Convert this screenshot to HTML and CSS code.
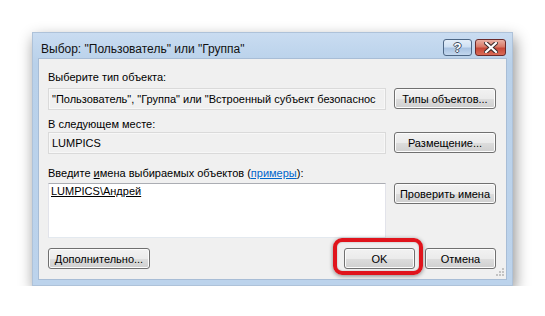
FILE: index.html
```html
<!DOCTYPE html>
<html lang="ru">
<head>
  <meta charset="UTF-8">
  <title>Выбор: "Пользователь" или "Группа"</title>
  <link rel="stylesheet" href="styles.css">
</head>
<body>

  <div class="window">
    <div class="titlebar">
      <span class="title">Выбор: "Пользователь" или "Группа"</span>
      <div class="caption-buttons">
        <span class="cap-btn help">?</span>
        <span class="cap-btn close">
          <svg width="14" height="11" viewBox="0 0 14 11">
            <path d="M2 1 L12 10 M12 1 L2 10" stroke="#3b2b2b" stroke-width="4.2" stroke-linecap="square"/>
            <path d="M2 1 L12 10 M12 1 L2 10" stroke="#fff" stroke-width="2.2" stroke-linecap="square"/>
          </svg>
        </span>
      </div>
    </div>

    <div class="client">
      <div class="label first">Выберите тип объекта:</div>
      <div class="row">
        <div class="field"><span class="clip">"Пользователь", "Группа" или "Встроенный субъект безопаснос</span></div>
        <button class="btn">Типы объектов...</button>
      </div>

      <div class="label second">В следующем месте:</div>
      <div class="row">
        <div class="field">LUMPICS</div>
        <button class="btn">Размещение...</button>
      </div>

      <div class="label third">Введите <u>и</u>мена выбираемых объектов (<a href="#">примеры</a>):</div>
      <div class="row">
        <div class="names"><u>LUMPICS\Андрей</u></div>
        <button class="btn">Проверить имена</button>
      </div>

      <div class="bottom">
        <button class="btn">Дополнительно...</button>
        <div class="actions">
          <div class="ok-wrap">
            <button class="btn ok">OK</button>
            <span class="highlight"></span>
          </div>
          <button class="btn small">Отмена</button>
        </div>
      </div>

      <svg class="grip" width="8" height="8" viewBox="0 0 8 8">
        <rect x="6" y="0" width="2" height="2" fill="#c3c3c3"/>
        <rect x="3" y="3" width="2" height="2" fill="#c3c3c3"/>
        <rect x="6" y="3" width="2" height="2" fill="#c3c3c3"/>
        <rect x="0" y="6" width="2" height="2" fill="#c3c3c3"/>
        <rect x="3" y="6" width="2" height="2" fill="#c3c3c3"/>
        <rect x="6" y="6" width="2" height="2" fill="#c3c3c3"/>
      </svg>
    </div>
  </div>

</body>
</html>
```

FILE: styles.css
```css
body {
  margin: 0;
  background: #ffffff;
  font-family: "Liberation Sans", Arial, sans-serif;
  font-size: 11px;
  color: #000;
}

.window {
  margin: 32px 0 0 32px;
  width: 481px;
  height: 254px;
  box-sizing: border-box;
  background: linear-gradient(#c9dcf1, #b9d1ea 30px, #bcd3ec);
  border: 1px solid #aec2d9;
  box-shadow: 2px 6px 14px rgba(0, 0, 0, 0.45);
  display: flex;
  flex-direction: column;
}

.titlebar {
  height: 25px;
  display: flex;
  align-items: flex-start;
  justify-content: space-between;
  padding: 0 6px 0 8px;
}

.title {
  margin-top: 9px;
  font-size: 12px;
  color: #111;
}

.caption-buttons {
  display: flex;
  gap: 3px;
  margin-top: 6px;
}

.cap-btn {
  height: 15px;
  border: 1px solid #4d6684;
  border-radius: 3px;
  display: flex;
  align-items: center;
  justify-content: center;
}

.help {
  width: 27px;
  background: linear-gradient(#e4eef9, #cfe0f3 45%, #a9c3e2 55%, #c3d7ee);
  color: #fff;
  font-weight: bold;
  font-size: 13px;
  text-shadow: 1px 0 #3d4c60, -1px 0 #3d4c60, 0 1px #3d4c60, 0 -1px #3d4c60;
}

.close {
  width: 29px;
  border-color: #6b2a2a;
  background: linear-gradient(#eab0a3, #d97a68 45%, #c74837 55%, #d96b57);
}

.client {
  position: relative;
  margin: 0 5px;
  height: 222px;
  box-sizing: border-box;
  background: #f0f0f0;
  border: 1px solid #a8bdd6;
  padding: 11px 10px 0 9px;
}

.label {
  height: 14px;
  line-height: 14px;
}

.first { margin-bottom: 4px; }
.second { margin: 7px 0 1px; }
.third { margin: 12px 0 3px; }

.label a {
  color: #0066cc;
}

.row {
  display: grid;
  grid-template-columns: 1fr 102px;
  column-gap: 8px;
  align-items: start;
}

.field {
  height: 22px;
  box-sizing: border-box;
  border: 1px solid #dadada;
  background: #f0f0f0;
  box-shadow: inset 0 0 0 1px #f7f7f7;
  padding: 4px 3px;
  white-space: nowrap;
  overflow: hidden;
}

.clip {
  display: block;
  overflow: hidden;
}

.names {
  height: 55px;
  box-sizing: border-box;
  border: 1px solid #abadb3;
  border-color: #abadb3 #e2e3ea #e3e9ef #e2e3ea;
  background: #fff;
  padding: 1px 2px;
}

.btn {
  height: 21px;
  width: 102px;
  box-sizing: border-box;
  border: 1px solid #707070;
  border-radius: 3px;
  background: linear-gradient(#f2f2f2, #ebebeb 50%, #dddddd 51%, #cfcfcf);
  box-shadow: inset 0 0 0 1px #fcfcfc;
  font-family: "Liberation Sans", Arial, sans-serif;
  font-size: 11px;
  color: #000;
  padding: 0;
}

.bottom {
  margin-top: 10px;
  display: flex;
  justify-content: space-between;
}

.actions {
  display: flex;
  gap: 10px;
}

.btn.ok,
.btn.small {
  width: 71px;
}

.ok-wrap {
  position: relative;
}

.highlight {
  position: absolute;
  left: -11px;
  top: -10px;
  width: 90px;
  height: 37px;
  box-sizing: border-box;
  border: 4px solid #e0141c;
  border-radius: 9px;
  box-shadow: 0 1px 4px rgba(0, 0, 0, 0.45), inset 0 0 2px rgba(0, 0, 0, 0.3);
}

.grip {
  position: absolute;
  right: 2px;
  bottom: 3px;
}
```
